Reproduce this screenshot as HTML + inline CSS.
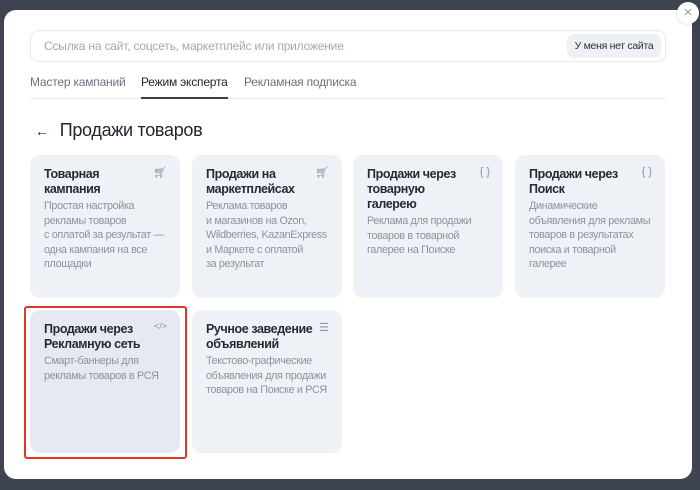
<!DOCTYPE html>
<html><head><meta charset="utf-8"><style>
*{box-sizing:border-box;margin:0;padding:0}
body{width:700px;height:490px;background:#3f4452;font-family:"Liberation Sans","Noto Sans CJK SC",sans-serif;position:relative;overflow:hidden}
.modal{position:absolute;left:4px;top:10px;width:688px;height:469px;background:#fff;border-radius:12px}
.close{position:absolute;left:677px;top:2px;width:22px;height:22px;border-radius:50%;background:#fff;color:#9aa0ad;font-size:15px;text-align:center;line-height:21px;box-shadow:0 0 4px rgba(0,0,0,.15)}
.search{position:absolute;left:26px;top:20px;width:636px;height:32px;border:1px solid #e6e8ee;border-radius:9px}
.search span{position:absolute;left:13px;top:8px;font-size:12px;color:#a3a8b4;letter-spacing:-0.2px}
.btn{position:absolute;right:4px;top:3px;width:94px;height:24px;background:#eef0f5;border-radius:7px;font-size:10.5px;color:#2b2f38;text-align:center;line-height:24px;letter-spacing:-0.3px}
.tabs{position:absolute;left:26px;top:65px;width:636px;height:24px;border-bottom:1px solid #e6e8ee;font-size:12px;color:#6b7180;letter-spacing:-0.2px}
.tabs span{position:absolute;top:0}
.tabs .a{color:#21252e;border-bottom:2px solid #3d414d;height:24px}
h1{position:absolute;left:31px;top:110px;font-size:18px;font-weight:normal;color:#21252e;letter-spacing:-0.3px}
h1 small{font-size:14px;margin-right:11px}
.card{position:absolute;width:150px;height:143px;background:#eef1f6;border-radius:10px;padding:12px 14px;white-space:nowrap}
.card b{display:block;font-size:12.5px;font-weight:bold;color:#262a33;line-height:15px;letter-spacing:-0.4px}
.card p{font-size:10.8px;color:#8c92a0;line-height:14.5px;margin-top:2px;letter-spacing:-0.35px}
.ic{position:absolute;right:13px;top:11px;color:#8d93a2;font-size:11px}
.sel{position:absolute;left:20px;top:296px;width:163px;height:153px;border:2px solid #e0352b;border-radius:3px}
</style></head><body>
<div class="modal">
<div class="search"><span>Ссылка на сайт, соцсеть, маркетплейс или приложение</span><div class="btn">У меня нет сайта</div></div>
<div class="tabs"><span style="left:0">Мастер кампаний</span><span class="a" style="left:111px">Режим эксперта</span><span style="left:214px">Рекламная подписка</span></div>
<h1><small>←</small>Продажи товаров</h1>
<div class="card" style="left:26px;top:145px"><b>Товарная<br>кампания</b><p>Простая настройка<br>рекламы товаров<br>с оплатой за результат —<br>одна кампания на все<br>площадки</p><span class="ic">🛒︎</span></div>
<div class="card" style="left:188px;top:145px"><b>Продажи на<br>маркетплейсах</b><p>Реклама товаров<br>и магазинов на Ozon,<br>Wildberries, KazanExpress<br>и Маркете с оплатой<br>за результат</p><span class="ic">🛒︎</span></div>
<div class="card" style="left:349px;top:145px"><b>Продажи через<br>товарную<br>галерею</b><p>Реклама для продажи<br>товаров в товарной<br>галерее на Поиске</p><span class="ic">{ }</span></div>
<div class="card" style="left:511px;top:145px"><b>Продажи через<br>Поиск</b><p>Динамические<br>объявления для рекламы<br>товаров в результатах<br>поиска и товарной<br>галерее</p><span class="ic">{ }</span></div>
<div class="card" style="left:26px;top:300px;background:#e6e9f1"><b>Продажи через<br>Рекламную сеть</b><p>Смарт-баннеры для<br>рекламы товаров в РСЯ</p><span class="ic" style="font-size:9px">&lt;/&gt;</span></div>
<div class="card" style="left:188px;top:300px"><b>Ручное заведение<br>объявлений</b><p>Текстово-графические<br>объявления для продажи<br>товаров на Поиске и РСЯ</p><span class="ic">☰</span></div>
<div class="sel"></div>
</div>
<div class="close">×</div>
</body></html>
